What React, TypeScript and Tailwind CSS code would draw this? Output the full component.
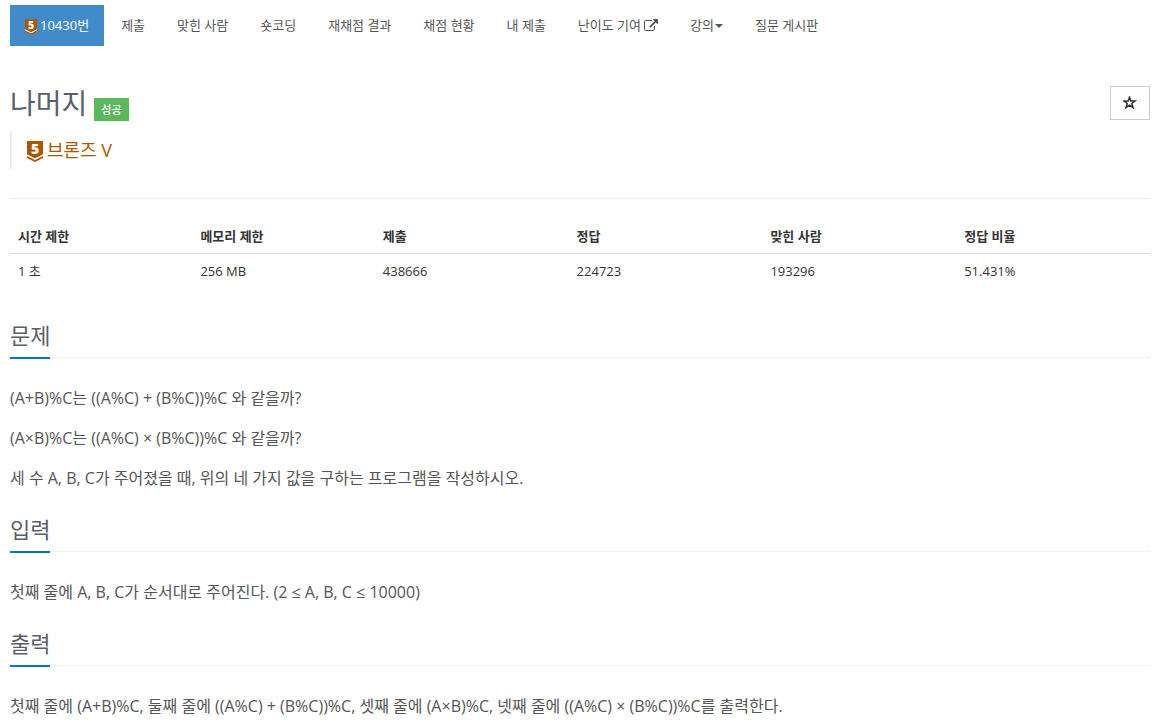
import type { ReactNode } from "react";

const navItems = [
  { label: "제출" },
  { label: "맞힌 사람" },
  { label: "숏코딩" },
  { label: "재채점 결과" },
  { label: "채점 현황" },
  { label: "내 제출" },
  { label: "난이도 기여", icon: "external" },
  { label: "강의", icon: "caret" },
  { label: "질문 게시판" },
];

const stats = [
  { label: "시간 제한", value: "1 초", width: "w-[16%]" },
  { label: "메모리 제한", value: "256 MB", width: "w-[16%]" },
  { label: "제출", value: "438666", width: "w-[17%]" },
  { label: "정답", value: "224723", width: "w-[17%]" },
  { label: "맞힌 사람", value: "193296", width: "w-[17%]" },
  { label: "정답 비율", value: "51.431%", width: "w-[17%]" },
];

function TierIcon({ className }: { className: string }) {
  return (
    <svg
      viewBox="0 0 16 21"
      className={`overflow-visible ${className}`}
      aria-hidden="true"
    >
      <path d="M0 0h16v13.5l-8 4-8-4z" fill="#ad5600" />
      <path d="M0 13.5l8 4 8-4v1.5l-8 4-8-4z" fill="#fff" />
      <path d="M0 15l8 4 8-4v2l-8 4-8-4z" fill="#ad5600" />
      <text
        x="8"
        y="13"
        textAnchor="middle"
        fontSize="14"
        fontWeight="800"
        fill="#fff"
        fontFamily="Open Sans, sans-serif"
      >
        5
      </text>
    </svg>
  );
}

function ExternalIcon() {
  return (
    <svg
      viewBox="0 0 1792 1792"
      className="w-[14px] h-[14px] ml-[3px]"
      fill="currentColor"
      aria-hidden="true"
    >
      <path d="M1408 928v320q0 119-84.5 203.5t-203.5 84.5h-832q-119 0-203.5-84.5t-84.5-203.5v-832q0-119 84.5-203.5t203.5-84.5h704q14 0 23 9t9 23v64q0 14-9 23t-23 9h-704q-66 0-113 47t-47 113v832q0 66 47 113t113 47h832q66 0 113-47t47-113v-320q0-14 9-23t23-9h64q14 0 23 9t9 23zm384-864v512q0 26-19 45t-45 19-45-19l-176-176-652 652q-10 10-23 10t-23-10l-114-114q-10-10-10-23t10-23l652-652-176-176q-19-19-19-45t19-45 45-19h512q26 0 45 19t19 45z" />
    </svg>
  );
}

function Caret() {
  return (
    <svg
      viewBox="0 0 8 4"
      className="w-2 h-1 ml-px"
      fill="currentColor"
      aria-hidden="true"
    >
      <path d="M0 0h8l-4 4z" />
    </svg>
  );
}

function Section({ title, children }: { title: string; children: ReactNode }) {
  return (
    <section className="mb-5">
      <div className="border-b border-dotted border-[#e4e9f0] mb-[25px]">
        <h2 className="inline-block align-top -mb-[2px] pb-[5px] border-b-2 border-[#0076c0] text-[22px] leading-[33px] text-[#585f69]">
          {title}
        </h2>
      </div>
      <div className="space-y-[10px] text-base leading-[30px]">{children}</div>
    </section>
  );
}

export default function App() {
  return (
    <div className="pt-[5px] pl-[10px] pr-[6px] bg-white text-[#555] text-[13px] leading-[21px] font-['Open_Sans','Noto_Sans_CJK_KR',sans-serif]">
      <nav>
        <ul className="flex flex-wrap gap-[2px]">
          <li>
            <a
              href="#problem"
              className="flex items-center gap-[3px] px-[15px] py-[10px] bg-[#428bca] text-white"
            >
              <TierIcon className="w-3 h-4 mt-px -mb-px" />
              10430번
            </a>
          </li>
          {navItems.map((item) => (
            <li key={item.label}>
              <a href="#menu" className="flex items-center px-[15px] py-[10px]">
                {item.label}
                {item.icon === "external" && <ExternalIcon />}
                {item.icon === "caret" && <Caret />}
              </a>
            </li>
          ))}
        </ul>
      </nav>

      <header className="mt-10 flex items-start justify-between">
        <div className="flex items-end gap-[7px]">
          <h1 className="text-[28px] leading-[35px] text-[#585f69]">나머지</h1>
          <span className="bg-[#5cb85c] text-white text-[11px] leading-[23px] font-medium px-[7px]">
            성공
          </span>
        </div>
        <button
          type="button"
          aria-label="즐겨찾기"
          className="flex items-center justify-center w-10 h-[34px] border border-[#ccc] text-[#333]"
        >
          <svg
            viewBox="0 0 14 14"
            className="w-[14px] h-[14px]"
            fill="none"
            stroke="currentColor"
            strokeWidth="1.5"
            aria-hidden="true"
          >
            <path d="M6.5 1.2l1.3 3.7h4.4L8.7 7.5l1.4 4.2-3.6-2.5-3.6 2.5 1.4-4.2L.8 4.9h4.4z" />
          </svg>
        </button>
      </header>

      <blockquote className="mt-[10px] flex items-center h-[38px] border-l-2 border-[#eee] pl-[15px] gap-1 text-lg text-[#ad5600]">
        <TierIcon className="w-4 h-[21px] mt-px -mb-px" />
        브론즈 V
      </blockquote>

      <hr className="mt-[29px] border-[#eee]" />

      <table className="w-full mt-5 table-fixed text-left text-[#333]">
        <thead>
          <tr className="border-b border-[#ddd]">
            {stats.map((s) => (
              <th key={s.label} className={`${s.width} px-2 pt-[7px] pb-[6px] font-bold`}>
                {s.label}
              </th>
            ))}
          </tr>
        </thead>
        <tbody>
          <tr>
            {stats.map((s) => (
              <td key={s.label} className="px-2 py-[7px]">
                {s.value}
              </td>
            ))}
          </tr>
        </tbody>
      </table>

      <main className="mt-[30px]">
        <Section title="문제">
          <p>(A+B)%C는 ((A%C) + (B%C))%C 와 같을까?</p>
          <p>(A×B)%C는 ((A%C) × (B%C))%C 와 같을까?</p>
          <p>세 수 A, B, C가 주어졌을 때, 위의 네 가지 값을 구하는 프로그램을 작성하시오.</p>
        </Section>
        <Section title="입력">
          <p>첫째 줄에 A, B, C가 순서대로 주어진다. (2 ≤ A, B, C ≤ 10000)</p>
        </Section>
        <Section title="출력">
          <p>
            첫째 줄에 (A+B)%C, 둘째 줄에 ((A%C) + (B%C))%C, 셋째 줄에 (A×B)%C, 넷째 줄에
            ((A%C) × (B%C))%C를 출력한다.
          </p>
        </Section>
      </main>
    </div>
  );
}
